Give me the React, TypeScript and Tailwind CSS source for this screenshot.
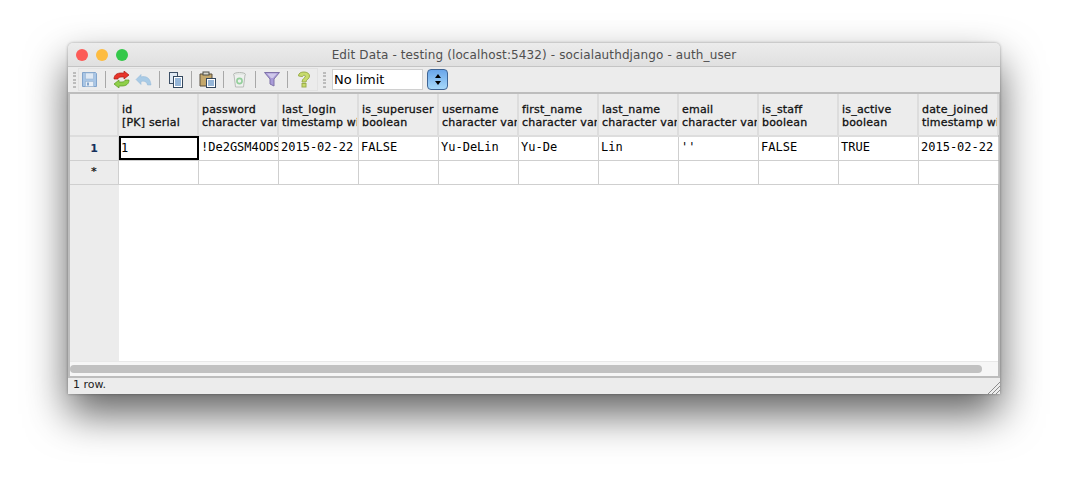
import React from "react";

const columns = [
  ["id", "[PK] serial", "1"],
  ["password", "character var", "!De2GSM4ODS"],
  ["last_login", "timestamp wi", "2015-02-22"],
  ["is_superuser", "boolean", "FALSE"],
  ["username", "character var", "Yu-DeLin"],
  ["first_name", "character var", "Yu-De"],
  ["last_name", "character var", "Lin"],
  ["email", "character var", "''"],
  ["is_staff", "boolean", "FALSE"],
  ["is_active", "boolean", "TRUE"],
  ["date_joined", "timestamp wi", "2015-02-22"],
];

function Separator() {
  return <div className="mx-[7px] h-[17px] w-px shrink-0 bg-[#a8a8a8]" />;
}

function Gripper() {
  return (
    <div className="flex h-[16px] w-[3px] shrink-0 flex-col justify-between">
      {[0, 1, 2, 3, 4].map((i) => (
        <div key={i} className="h-[2px] w-[3px] bg-[#bcbcbc]" />
      ))}
    </div>
  );
}

function Tool({ children }: { children: React.ReactNode }) {
  return <div className="flex w-[17px] shrink-0 justify-center">{children}</div>;
}

function SaveIcon() {
  return (
    <svg width="15" height="15" viewBox="0 0 15 15">
      <path d="M.5.5h13l1 1v13H.5z" fill="#a9c6e6" stroke="#83a5cc" />
      <rect x="3.500" y="1" width="8" height="6" fill="#dfe9f4" stroke="#9ab5d3" strokeWidth="0.6" />
      <rect x="3.500" y="9.500" width="8" height="5" fill="#e9eff6" stroke="#9ab5d3" strokeWidth="0.6" />
      <rect x="5" y="10.500" width="2" height="3" fill="#83a5cc" />
    </svg>
  );
}

function RefreshIcon() {
  return (
    <svg width="17" height="17" viewBox="0 0 17 17">
      <path d="M1 8C1 4 4 2 8 2h3V0l5 4-5 4V6H8C6 6 5 7 5 8z" fill="#e8352b" stroke="#a81c14" strokeWidth="0.7" />
      <path d="M16 9c0 4-3 6-7 6H6v2l-5-4 5-4v2h3c2 0 3-1 3-2z" fill="#8fd04a" stroke="#5b9a24" strokeWidth="0.7" />
    </svg>
  );
}

function UndoIcon() {
  return (
    <svg width="17" height="14" viewBox="0 0 16 14">
      <path d="M.5 6.500L5.500 1.500V4c5-1.500 9.500 1 10 8h-3.500c-.5-3-3-4.500-6.500-3.500v3z" fill="#a9cbe6" stroke="#93b7d6" strokeWidth="0.5" />
    </svg>
  );
}

function CopyIcon() {
  return (
    <svg width="15" height="16" viewBox="0 0 15 16">
      <rect x="1.500" y="0.500" width="8" height="11" fill="#dfe8f2" stroke="#3c4f66" />
      <rect x="5.500" y="4.500" width="9" height="11" fill="#fff" stroke="#33475e" />
      <path d="M7 7h6M7 9h6M7 11h6M7 13h6" stroke="#2c6cb0" />
    </svg>
  );
}

function PasteIcon() {
  return (
    <svg width="17" height="17" viewBox="0 0 17 17">
      <path d="M1 3h12v12H1z" fill="#c4a86c" stroke="#5a5140" />
      <rect x="4" y="1" width="6" height="3" fill="#d8d8d0" stroke="#4c4c44" />
      <rect x="7.500" y="7.500" width="9" height="9" fill="#fff" stroke="#33475e" />
      <path d="M9 10h6M9 12h6M9 14h6" stroke="#2c6cb0" />
    </svg>
  );
}

function TrashIcon() {
  return (
    <svg width="15" height="16" viewBox="0 0 15 16">
      <ellipse cx="7.500" cy="2.500" rx="6" ry="2" fill="#e4e8e4" stroke="#b4b8b4" />
      <path d="M2 3l1.500 12h8L13 3" fill="#eef0ee" stroke="#b8bcb8" />
      <circle cx="7.500" cy="9" r="2.600" fill="none" stroke="#93cf9b" strokeWidth="1.600" />
    </svg>
  );
}

function FilterIcon() {
  return (
    <svg width="16" height="15" viewBox="0 0 16 15">
      <path d="M.5.5h15L10 7v7L6 12V7z" fill="#a99bd8" stroke="#7f72a8" />
      <path d="M3 1.500h10L9 6H7z" fill="#cfc8ea" />
    </svg>
  );
}

function HelpIcon() {
  return (
    <svg width="14" height="17" viewBox="0 0 13 17">
      <path d="M1 5C1 2 3.500 1 6.500 1S12 2.500 12 5c0 3-3.500 3.500-3.500 6h-4C4.500 7.500 8 7 8 5c0-1-3-1-3 .5z" fill="#c8dc6c" stroke="#9cae4c" />
      <rect x="4.500" y="12.500" width="4" height="3.500" fill="#c8dc6c" stroke="#9cae4c" />
    </svg>
  );
}

export default function App() {
  return (
    <div className="h-[486px] w-[1068px] overflow-hidden bg-white pl-[68px] pt-[43px] font-['DejaVu_Sans',sans-serif]">
      <div className="flex h-[351px] w-[932px] flex-col overflow-hidden rounded-t-[5px] bg-[#ececec] shadow-[0_20px_42px_rgba(0,0,0,0.62),0_0_3px_rgba(0,0,0,0.35)]">
        {/* title bar */}
        <div className="relative flex h-[23px] shrink-0 items-center justify-center bg-gradient-to-b from-[#ececec] to-[#e0e0e0] pt-px text-[12px] tracking-[0.12px] text-[#4f4f4f]">
          <div className="absolute left-[8px] top-[6px] flex gap-[8px]">
            <div className="h-[12px] w-[12px] rounded-full bg-[#fc5b57]" />
            <div className="h-[12px] w-[12px] rounded-full bg-[#fdbc40]" />
            <div className="h-[12px] w-[12px] rounded-full bg-[#34c84a]" />
          </div>
          <span>Edit Data - testing (localhost:5432) - socialauthdjango - auth_user</span>
        </div>

        {/* toolbar */}
        <div className="flex h-[26px] shrink-0 items-center border-t border-[#c4c4c4] bg-[#ececec] pl-[5px]">
          <Gripper />
          <div className="ml-[2px] flex h-[23px] w-[240px] shrink-0 items-center border border-[#e2e2e2] pl-[2px]">
            <Tool><SaveIcon /></Tool>
            <Separator />
            <Tool><RefreshIcon /></Tool>
            <div className="ml-[5px]"><Tool><UndoIcon /></Tool></div>
            <Separator />
            <Tool><CopyIcon /></Tool>
            <Separator />
            <Tool><PasteIcon /></Tool>
            <Separator />
            <Tool><TrashIcon /></Tool>
            <Separator />
            <Tool><FilterIcon /></Tool>
            <Separator />
            <Tool><HelpIcon /></Tool>
          </div>
          <div className="ml-[5px]"><Gripper /></div>
          <div className="ml-[6px] flex h-[21px] w-[91px] shrink-0 items-center border border-[#d0d0d0] bg-white pl-[1px] text-[13px] text-black">
            No limit
          </div>
          <div className="ml-[4px] flex h-[21px] w-[21px] shrink-0 flex-col items-center justify-center gap-[3px] rounded-[4px] border border-[#3f6595] bg-gradient-to-b from-[#6aa6ea] to-[#a6d8fa]">
            <div className="h-0 w-0 border-x-[3px] border-b-[4px] border-x-transparent border-b-black" />
            <div className="h-0 w-0 border-x-[3px] border-t-[4px] border-x-transparent border-t-black" />
          </div>
        </div>

        {/* grid */}
        <div className="flex min-h-0 flex-1 flex-col border-x-2 border-t-2 border-[#bdbdbd] bg-white">
          <div className="flex h-[43px] shrink-0 border-b-2 border-[#dddddd]">
            <div className="w-[49px] shrink-0 border-r-2 border-[#dddddd] bg-[#ececec]" />
            {columns.map(([name, type]) => (
              <div
                key={name}
                className="w-[80px] shrink-0 overflow-hidden whitespace-nowrap border-r-2 border-[#dddddd] bg-[#ececec] pl-[3px] pt-[9px] text-[11px] leading-[13px] tracking-[0.2px] text-[#111111] [-webkit-text-stroke:0.3px_#111111]"
              >
                <div>{name}</div>
                <div>{type}</div>
              </div>
            ))}
          </div>
          <div className="flex h-[24px] shrink-0 border-b border-[#cfcfcf]">
            <div className="flex w-[49px] shrink-0 items-center justify-center border-r border-[#cfcfcf] bg-[#ececec] pt-[2px] text-[11px] font-bold text-[#16305c]">
              1
            </div>
            {columns.map(([name, , value], i) => (
              <div
                key={name}
                className={
                  i === 0
                    ? "-mt-px w-[80px] shrink-0 overflow-hidden whitespace-nowrap border-2 border-black font-['DejaVu_Sans_Mono',monospace] text-[12px] leading-[20px] text-black"
                    : "w-[80px] shrink-0 overflow-hidden whitespace-nowrap border-r border-[#cfcfcf] pl-[2px] font-['DejaVu_Sans_Mono',monospace] text-[12px] leading-[20px] text-black"
                }
              >
                {value}
              </div>
            ))}
          </div>
          <div className="flex h-[24px] shrink-0 border-b border-[#cfcfcf]">
            <div className="flex w-[49px] shrink-0 items-center justify-center border-r border-[#cfcfcf] bg-[#ececec] text-[11px] font-bold text-[#222222]">
              *
            </div>
            {columns.map(([name]) => (
              <div key={name} className="w-[80px] shrink-0 border-r border-[#cfcfcf]" />
            ))}
          </div>
          <div className="flex min-h-0 flex-1">
            <div className="w-[49px] shrink-0 bg-[#ececec]" />
          </div>
          {/* scrollbar */}
          <div className="flex h-[15px] shrink-0 items-center border-t border-[#e8e8e8] bg-[#f6f6f6]">
            <div className="h-[8px] w-[912px] rounded-full bg-[#c1c1c1]" />
          </div>
        </div>

        {/* status bar */}
        <div className="relative flex h-[18px] shrink-0 items-center border-t-2 border-[#bdbdbd] pb-[2px] pl-[5px] text-[11px] text-[#222222]">
          1 row.
          <svg className="absolute bottom-0 right-0" width="12" height="12" viewBox="0 0 12 12">
            <path d="M0 12L12 0M4 12L12 4M8 12L12 8" stroke="#8c8c8c" strokeWidth="1" />
          </svg>
        </div>
      </div>
    </div>
  );
}
